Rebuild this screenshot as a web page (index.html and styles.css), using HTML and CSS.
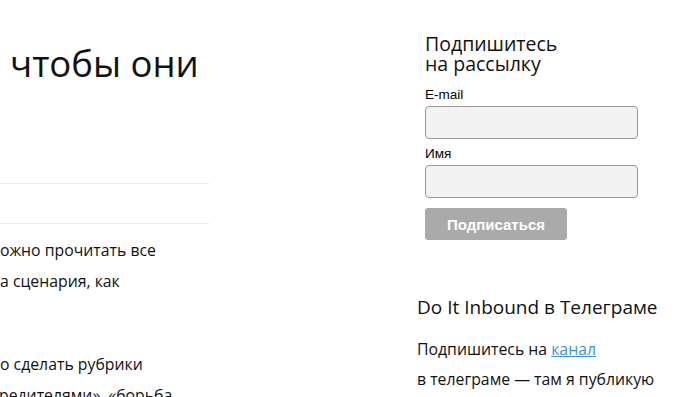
FILE: index.html
```html
<!DOCTYPE html>
<html lang="ru">
<head>
    <meta charset="UTF-8" />
    <title>Do It Inbound</title>
    <link rel="stylesheet" href="styles.css">
</head>
<body>
    <div class="page">
        <main class="content">
            <h1 class="post-title">чтобы они</h1>
            <div class="post-meta"></div>
            <div class="post-body">
                <p>ожно прочитать все<br>а сценария, как<br>&nbsp;</p>
                <p>о сделать рубрики<br><span class="cut">редителями», «борьба</span></p>
            </div>
        </main>

        <aside class="sidebar">
            <form class="subscribe">
                <h3>Подпишитесь<br>на рассылку</h3>
                <label for="email">E-mail</label>
                <input type="text" id="email" />
                <label for="name">Имя</label>
                <input type="text" id="name" />
                <button type="submit">Подписаться</button>
            </form>

            <section class="telegram">
                <h3>Do It Inbound в Телеграме</h3>
                <p>Подпишитесь на <a href="#">канал</a><br>в телеграме — там я публикую</p>
            </section>
        </aside>
    </div>
</body>
</html>
```

FILE: styles.css
```css
* {
    box-sizing: border-box;
    margin: 0;
    padding: 0;
}

body {
    font-family: 'Open Sans', sans-serif;
    color: #111;
    background: #fff;
    overflow: hidden;
    height: 397px;
}

.page {
    display: flex;
    width: 700px;
}

.content {
    width: 209px;
    flex-shrink: 0;
    overflow: hidden;
}

.post-title {
    font-size: 36.5px;
    font-weight: 400;
    line-height: 44px;
    padding: 41px 0 0 10px;
    white-space: nowrap;
}

.post-meta {
    margin-top: 98px;
    height: 41px;
    border-top: 1px solid #eaeaea;
    border-bottom: 1px solid #eaeaea;
}

.post-body {
    padding-top: 11px;
    font-size: 15.8px;
    line-height: 31px;
    white-space: nowrap;
}

.post-body p {
    margin-bottom: 21px;
}

.cut {
    margin-left: -1px;
}

.sidebar {
    margin-left: 208px;
    width: 280px;
    flex-shrink: 0;
}

.subscribe {
    display: flex;
    flex-direction: column;
    align-items: flex-start;
    padding: 34px 0 0 8px;
    font-family: 'Liberation Sans', Arial, sans-serif;
}

.subscribe h3 {
    font-family: 'Open Sans', sans-serif;
    font-size: 19.5px;
    font-weight: 400;
    line-height: 20px;
    margin-bottom: 13px;
}

.subscribe label {
    font-size: 13.5px;
    line-height: 16px;
    margin-bottom: 3px;
    color: #000;
}

.subscribe input {
    width: 213px;
    height: 33px;
    background: #f2f2f2;
    border: 1px solid #999;
    border-radius: 4px;
    margin-bottom: 7px;
}

.subscribe button {
    width: 142px;
    height: 32px;
    margin-top: 3px;
    background: #aaa;
    color: #fff;
    font-family: 'Liberation Sans', Arial, sans-serif;
    font-weight: 700;
    font-size: 15px;
    border: none;
    border-radius: 3px;
}

.telegram {
    margin-top: 55px;
}

.telegram h3 {
    font-size: 19px;
    font-weight: 400;
    line-height: 24px;
    margin-bottom: 15px;
}

.telegram p {
    font-size: 15.8px;
    line-height: 30px;
}

.telegram a {
    color: #3d8fe0;
}
```
